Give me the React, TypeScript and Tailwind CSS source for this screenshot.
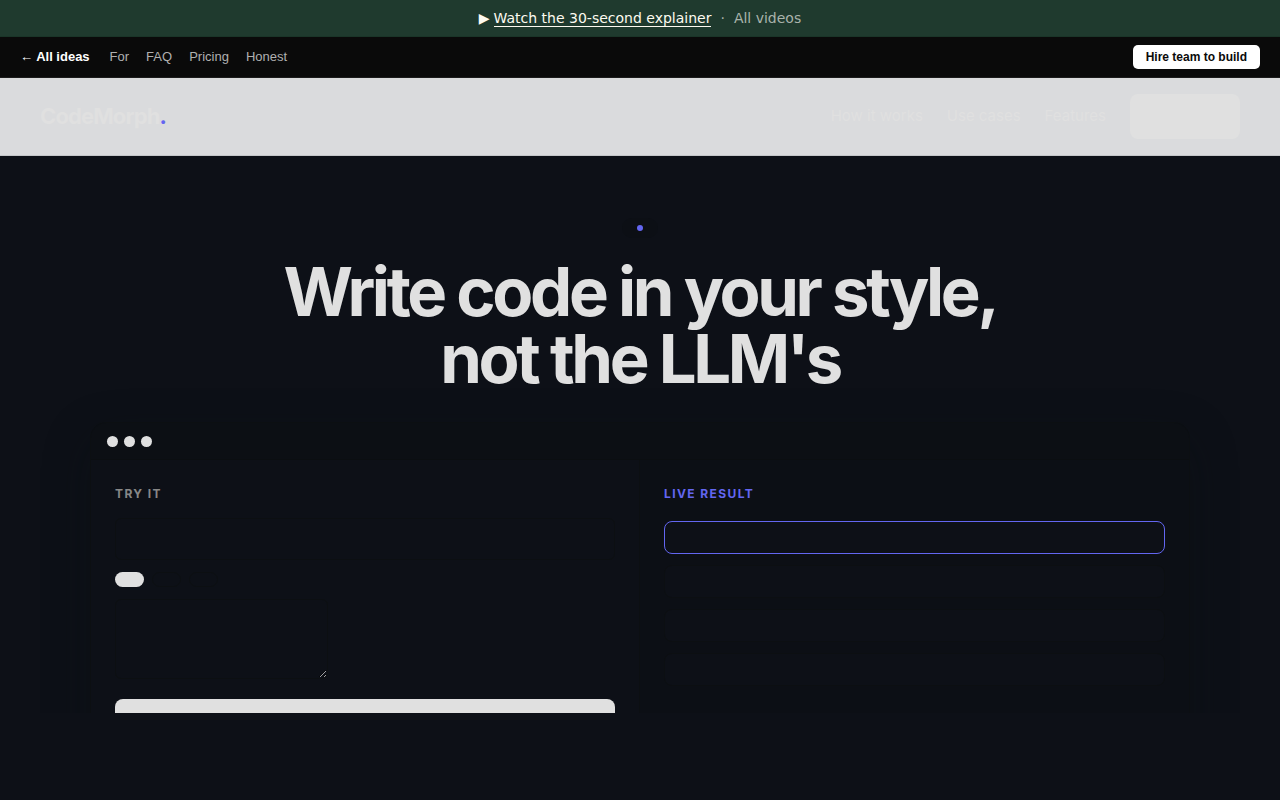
const ideaLinks = ['For', 'FAQ', 'Pricing', 'Honest'];
const siteLinks = ['How it works', 'Use cases', 'Features'];
const results = ['First result', 'Second result', 'Third result', 'Fourth result'];

function VideoBanner() {
  return (
    <div className="flex h-[37px] items-center justify-center border-b border-[#1a3528] bg-[#1f3a2e] font-['DejaVu_Sans',sans-serif] text-sm text-[#fdfaf0]">
      <span className="mr-1">▶</span>
      <a href="#explainer" className="border-b border-[#fdfaf0] leading-4">Watch the 30-second explainer</a>
      <span className="mx-[9px] text-[#a5b0a8]">·</span>
      <a href="#videos" className="text-[#a9b3ab]">All videos</a>
    </div>
  );
}

function IdeaBar() {
  return (
    <nav aria-label="Ideas" className="flex h-[41px] items-center justify-between border-b border-[#1c1c1c] bg-[#0a0a0a] px-5 font-['Liberation_Sans',sans-serif] text-[13px]">
      <div className="flex items-center gap-[17px]">
        <a href="#ideas" className="mr-[3px] font-bold text-white">← All ideas</a>
        {ideaLinks.map((label) => (
          <a key={label} href={`#${label.toLowerCase()}`} className="text-[#b0b0b0]">{label}</a>
        ))}
      </div>
      <a href="#hire" className="flex h-6 items-center rounded-[5px] bg-white px-[13px] text-xs font-bold text-[#0a0a0a]">Hire team to build</a>
    </nav>
  );
}

function SiteHeader() {
  return (
    <header className="flex h-[78px] items-center justify-between border-b border-[#c4c6c9] bg-[#dadbdd] px-10 text-[#e0e0e0]">
      <a href="#home" className="text-[22px] font-bold tracking-[-0.04em]">
        CodeMorph<span className="text-[#6366f1]">.</span>
      </a>
      <nav aria-label="Main" className="flex items-center gap-6 text-[15px]">
        {siteLinks.map((label) => (
          <a key={label} href={`#${label.toLowerCase().replaceAll(' ', '-')}`}>{label}</a>
        ))}
        <button type="button" aria-label="Get started" className="h-[45px] w-[110px] rounded-lg bg-[#e0e0e0]" />
      </nav>
    </header>
  );
}

function TryPane() {
  return (
    <form className="border-r border-[#0c0f12] p-6">
      <label htmlFor="source" className="block text-xs leading-5 font-bold tracking-[1.4px] text-[#888888]">TRY IT</label>
      <input id="source" className="mt-[14px] block h-[42px] w-full rounded-md border border-[#0c0f12] bg-[#0d1017] px-3 text-[#e0e0e0] outline-none" />
      <div className="mt-3 flex gap-2">
        <button type="button" aria-label="First style" className="h-[15px] w-[29px] rounded-full bg-[#e0e0e0]" />
        <button type="button" aria-label="Second style" className="h-[15px] w-[29px] rounded-full border border-[#0c0f12]" />
        <button type="button" aria-label="Third style" className="h-[15px] w-[29px] rounded-full border border-[#0c0f12]" />
      </div>
      <textarea aria-label="Code" className="mt-3 block h-20 w-[213px] resize rounded-md border border-[#0c0f12] bg-[#0d1017] p-3 text-[#e0e0e0] outline-none" />
      <button type="button" aria-label="Transform" className="mt-5 block h-11 w-full rounded-lg bg-[#e0e0e0]" />
    </form>
  );
}

function ResultPane() {
  return (
    <section className="bg-[#0c0f15] p-6">
      <h2 className="text-xs leading-5 font-bold tracking-[1.4px] text-[#6366f1]">LIVE RESULT</h2>
      <ul className="mt-[17px] flex flex-col gap-[11px]">
        {results.map((label, index) => (
          <li
            key={label}
            aria-label={label}
            className={
              index === 0
                ? 'h-[33px] rounded-lg border border-[#6366f1] bg-[#0d1017]'
                : 'h-[33px] rounded-lg border border-[#0c0f12] bg-[#0d1017]'
            }
          />
        ))}
      </ul>
    </section>
  );
}

function DemoWindow() {
  return (
    <div className="mx-auto mt-[30px] max-w-[1100px] overflow-hidden rounded-2xl border border-[#0c0f12] bg-[#0d1017] shadow-[0_16px_48px_rgba(11,15,20,0.3)]">
      <div className="flex h-[37px] items-center gap-[6px] border-b border-[#0b0e11] bg-[#0c0f14] px-4">
        <span className="size-[11px] rounded-full bg-[#e0e0e0]" />
        <span className="size-[11px] rounded-full bg-[#e0e0e0]" />
        <span className="size-[11px] rounded-full bg-[#e0e0e0]" />
      </div>
      <div className="grid grid-cols-2">
        <TryPane />
        <ResultPane />
      </div>
    </div>
  );
}

export default function App() {
  return (
    <div className="min-h-screen bg-[#0d1017] font-['Inter',sans-serif]">
      <VideoBanner />
      <IdeaBar />
      <SiteHeader />
      <main className="max-h-[557px] overflow-hidden px-10 pt-[62px]">
        <div className="mx-auto flex h-5 w-9 items-center justify-center rounded-full bg-[#0c0f15]">
          <span className="size-[6px] rounded-full bg-[#6366f1]" />
        </div>
        <h1 className="mt-5 text-center text-[67px] leading-[67px] font-bold tracking-tighter text-[#e0e0e0]">
          Write code in your style,
          <br />
          not the LLM's
        </h1>
        <DemoWindow />
      </main>
    </div>
  );
}
